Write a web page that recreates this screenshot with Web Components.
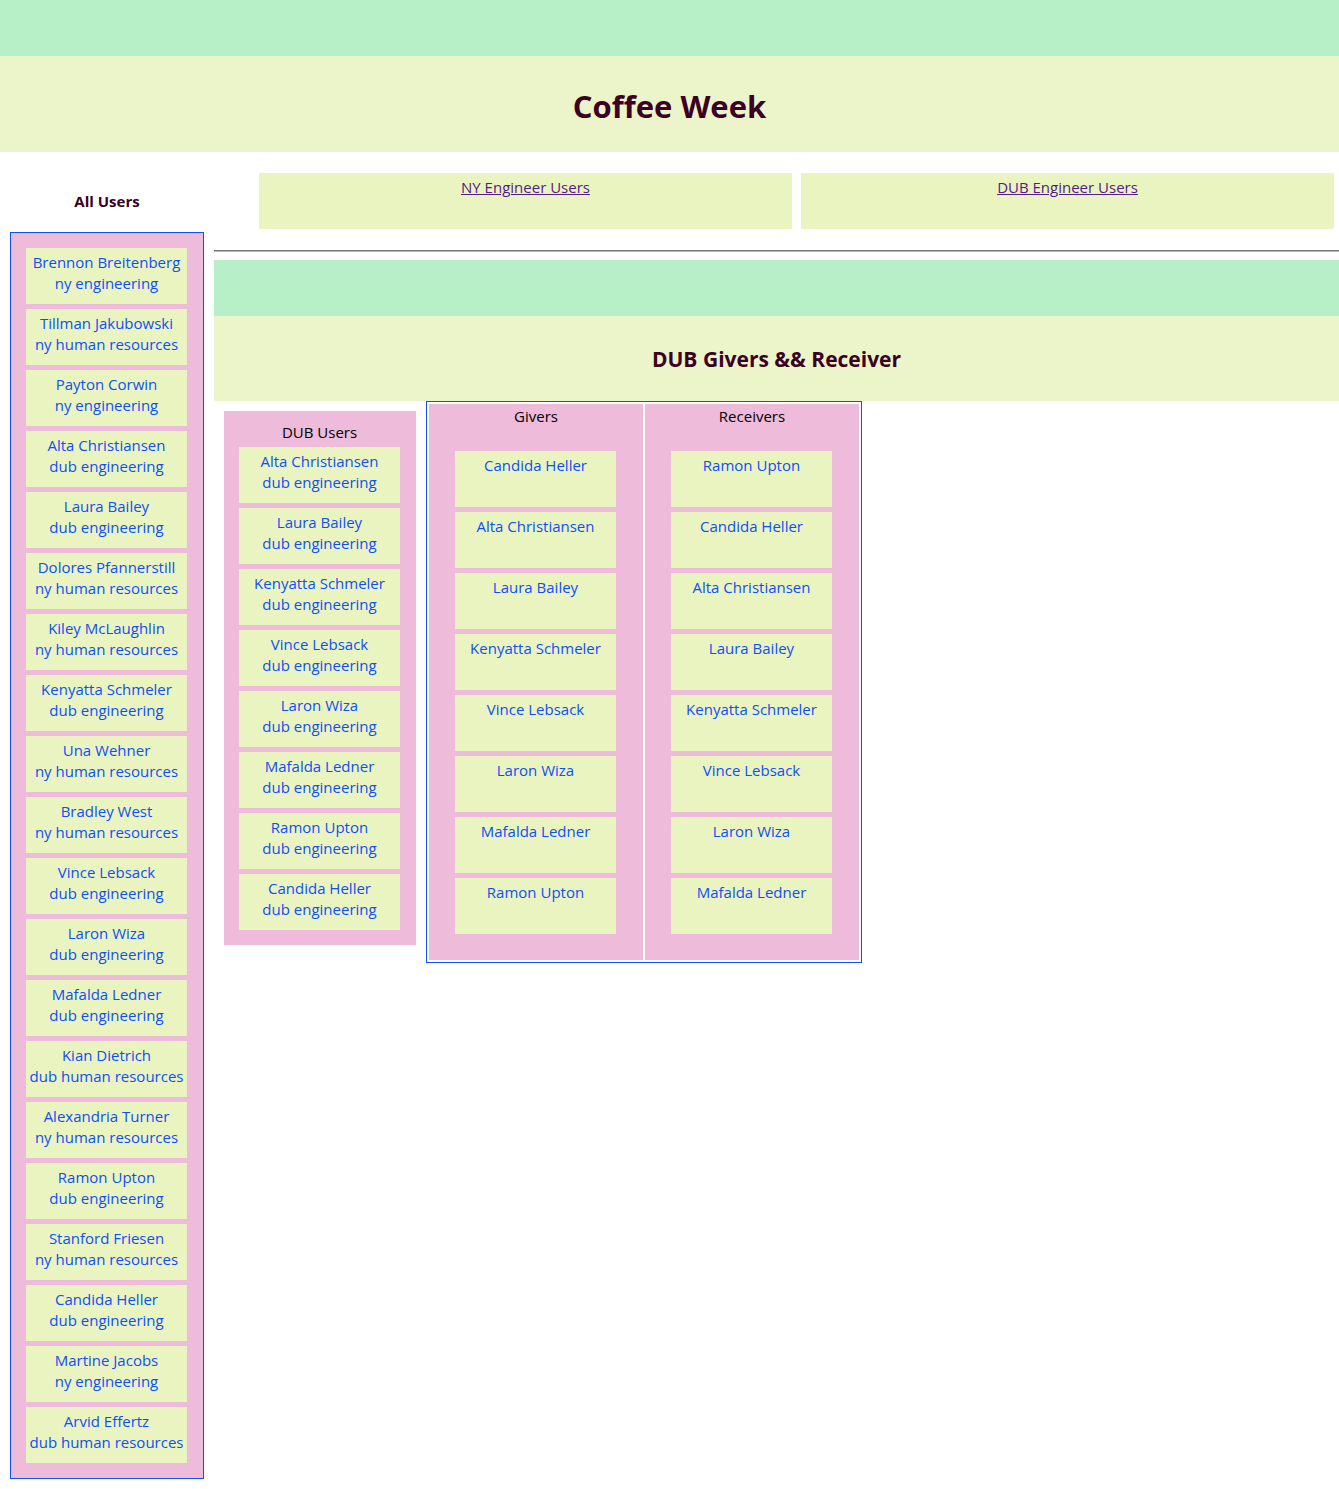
<!DOCTYPE html>
<html lang="en">
<head>
<meta charset="utf-8">
<title>Coffee Week</title>
<style>
  body {
    margin: 0;
    background: #fff;
    color: #000;
    font: 15px/21px "Segoe UI", "Open Sans", "Noto Sans", sans-serif;
    --mint: #b7f0c6;
    --lime: #ecf4ca;
    --card: #eaf4c1;
    --pink: #eebbda;
    --blue: #0f4ff5;
    --heading: #3b0022;
  }
</style>
</head>
<body>
<coffee-app></coffee-app>
<script>
const USERS = [
  ["Brennon Breitenberg", "ny engineering"],
  ["Tillman Jakubowski", "ny human resources"],
  ["Payton Corwin", "ny engineering"],
  ["Alta Christiansen", "dub engineering"],
  ["Laura Bailey", "dub engineering"],
  ["Dolores Pfannerstill", "ny human resources"],
  ["Kiley McLaughlin", "ny human resources"],
  ["Kenyatta Schmeler", "dub engineering"],
  ["Una Wehner", "ny human resources"],
  ["Bradley West", "ny human resources"],
  ["Vince Lebsack", "dub engineering"],
  ["Laron Wiza", "dub engineering"],
  ["Mafalda Ledner", "dub engineering"],
  ["Kian Dietrich", "dub human resources"],
  ["Alexandria Turner", "ny human resources"],
  ["Ramon Upton", "dub engineering"],
  ["Stanford Friesen", "ny human resources"],
  ["Candida Heller", "dub engineering"],
  ["Martine Jacobs", "ny engineering"],
  ["Arvid Effertz", "dub human resources"]
];
const DUB = ["Alta Christiansen", "Laura Bailey", "Kenyatta Schmeler", "Vince Lebsack",
  "Laron Wiza", "Mafalda Ledner", "Ramon Upton", "Candida Heller"];
const GIVERS = ["Candida Heller", "Alta Christiansen", "Laura Bailey", "Kenyatta Schmeler",
  "Vince Lebsack", "Laron Wiza", "Mafalda Ledner", "Ramon Upton"];
const RECEIVERS = ["Ramon Upton", "Candida Heller", "Alta Christiansen", "Laura Bailey",
  "Kenyatta Schmeler", "Vince Lebsack", "Laron Wiza", "Mafalda Ledner"];

function define(name, render) {
  customElements.define(name, class extends HTMLElement {
    connectedCallback() {
      if (!this.shadowRoot) this.attachShadow({ mode: "open" }).innerHTML = render(this);
    }
  });
}

const card = (name, dept) =>
  `<user-card>${name}${dept ? `<span slot="dept">${dept}</span>` : ""}</user-card>`;

// Small lime tile with a name and an optional office line.
define("user-card", () => `
  <style>
    :host { display: block; box-sizing: border-box; height: 56px; padding-top: 4px;
      background: var(--card); color: var(--blue); text-align: center; white-space: nowrap; }
    div { height: 21px; }
  </style>
  <div><slot></slot></div>
  <div><slot name="dept"></slot></div>`);

// Mint strip above a lime band that holds a heading.
define("page-banner", () => `
  <style>
    :host { display: block; text-align: center; color: var(--heading); }
    .strip { height: 56px; background: var(--mint); }
    .band { background: var(--lime); padding: var(--band-padding, 30px 0 26px); }
  </style>
  <div class="strip"></div>
  <div class="band"><slot></slot></div>`);

// Pink panel that stacks cards, with an optional caption.
define("user-panel", () => `
  <style>
    :host { display: block; box-sizing: content-box; width: 161px; background: var(--pink);
      padding: 15px 16px 15px 15px; }
    :host([outlined]) { border: 1px solid var(--blue); }
    :host([captioned]) { padding-top: 11px; }
    .stack { display: flex; flex-direction: column; gap: 5px; }
    ::slotted([slot="caption"]) { display: block; height: 25px; text-align: center; }
  </style>
  <slot name="caption"></slot>
  <div class="stack"><slot></slot></div>`);

define("nav-tile", host => `
  <style>
    :host { display: block; flex: 1; box-sizing: border-box; height: 56px; padding-top: 4px;
      background: var(--card); text-align: center; }
    a { color: #551a8b; text-decoration: underline; }
  </style>
  <a href="${host.getAttribute("href")}"><slot></slot></a>`);

define("pair-table", () => `
  <style>
    :host { display: block; }
    table { box-sizing: border-box; border: 1px solid var(--blue); border-spacing: 2px 0;
      padding: 2px 0; }
    th { height: 45px; padding: 2px 0 0; font-weight: normal; vertical-align: top;
      background: var(--pink); }
    td { width: 161px; padding: 0 27px 5px 26px; background: var(--pink); }
    tr:last-child td { padding-bottom: 26px; }
  </style>
  <table>
    <thead><tr><th scope="col">Givers</th><th scope="col">Receivers</th></tr></thead>
    <tbody>${GIVERS.map((g, i) =>
      `<tr><td>${card(g)}</td><td>${card(RECEIVERS[i])}</td></tr>`).join("")}</tbody>
  </table>`);

define("coffee-app", () => `
  <style>
    :host { display: block; }
    h1, h2, h4 { margin: 0; color: var(--heading); text-align: center; }
    h1 { font-size: 31px; line-height: 40px; }
    h2 { font-size: 21px; line-height: 27px; }
    h4 { font-size: 15px; line-height: 21px; padding: 39px 0 20px; }
    .second { --band-padding: 30px 0 28px; }
    .columns { display: flex; align-items: flex-start; }
    aside { flex: none; padding: 0 10px 10px; }
    main { flex: 1; min-width: 0; }
    nav { display: flex; gap: 9px; padding: 21px 5px 21px 45px; }
    hr { margin: 0 0 8px; border: 0; border-top: 1px solid #757575;
      border-bottom: 1px solid #b8b8b8; }
    .groups { display: flex; align-items: flex-start; gap: 10px; padding-left: 10px; }
    .groups user-panel { margin-top: 10px; }
  </style>
  <page-banner><h1>Coffee Week</h1></page-banner>
  <div class="columns">
    <aside>
      <h4>All Users</h4>
      <user-panel outlined>${USERS.map(u => card(...u)).join("")}</user-panel>
    </aside>
    <main>
      <nav>
        <nav-tile href="#ny">NY Engineer Users</nav-tile>
        <nav-tile href="#dub">DUB Engineer Users</nav-tile>
      </nav>
      <hr>
      <page-banner class="second"><h2>DUB Givers &amp;&amp; Receiver</h2></page-banner>
      <div class="groups">
        <user-panel captioned><span slot="caption">DUB Users</span>${
          DUB.map(n => card(n, "dub engineering")).join("")}</user-panel>
        <pair-table></pair-table>
      </div>
    </main>
  </div>`);
</script>
</body>
</html>
